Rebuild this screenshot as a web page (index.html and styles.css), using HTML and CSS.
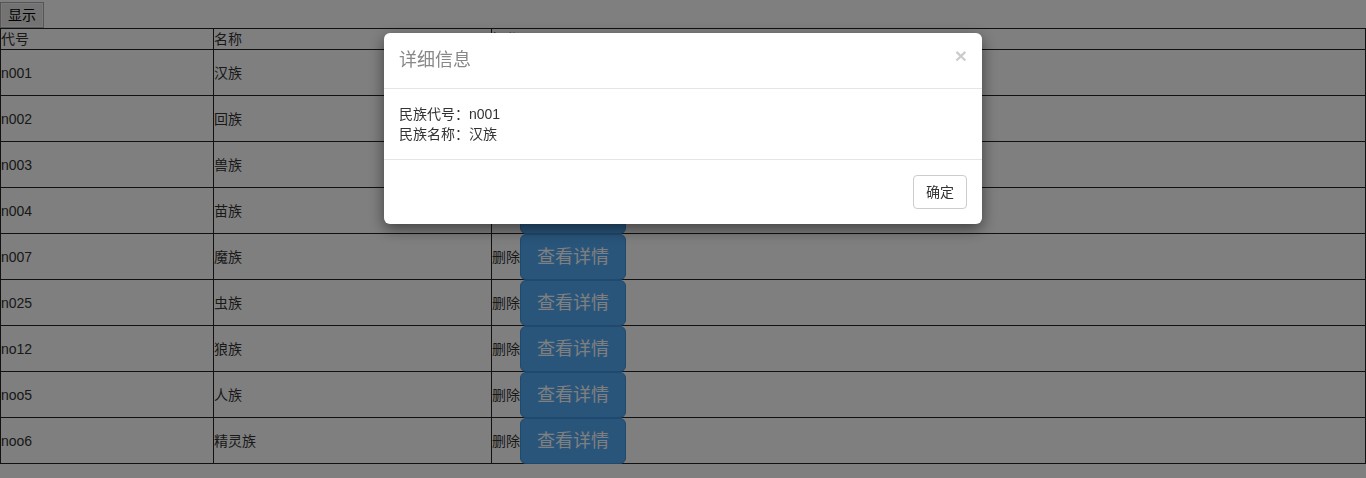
FILE: index.html
```html
<!DOCTYPE html>
<html lang="zh-CN">
<head>
  <meta charset="UTF-8">
  <meta name="viewport" content="width=device-width, initial-scale=1.0">
  <title>民族列表</title>
  <link rel="stylesheet" href="styles.css">
</head>
<body>
  <button class="show-btn">显示</button>
  <table class="nation-table">
    <colgroup>
      <col class="col-code">
      <col class="col-name">
      <col>
    </colgroup>
    <tr class="head-row">
      <td>代号</td>
      <td>名称</td>
      <td>操作</td>
    </tr>
    <tr><td>n001</td><td>汉族</td><td><div class="ops">删除<button class="btn-detail">查看详情</button></div></td></tr>
    <tr><td>n002</td><td>回族</td><td><div class="ops">删除<button class="btn-detail">查看详情</button></div></td></tr>
    <tr><td>n003</td><td>兽族</td><td><div class="ops">删除<button class="btn-detail">查看详情</button></div></td></tr>
    <tr><td>n004</td><td>苗族</td><td><div class="ops">删除<button class="btn-detail">查看详情</button></div></td></tr>
    <tr><td>n007</td><td>魔族</td><td><div class="ops">删除<button class="btn-detail">查看详情</button></div></td></tr>
    <tr><td>n025</td><td>虫族</td><td><div class="ops">删除<button class="btn-detail">查看详情</button></div></td></tr>
    <tr><td>no12</td><td>狼族</td><td><div class="ops">删除<button class="btn-detail">查看详情</button></div></td></tr>
    <tr><td>noo5</td><td>人族</td><td><div class="ops">删除<button class="btn-detail">查看详情</button></div></td></tr>
    <tr><td>noo6</td><td>精灵族</td><td><div class="ops">删除<button class="btn-detail">查看详情</button></div></td></tr>
  </table>

  <div class="backdrop"></div>
  <div class="modal">
    <div class="modal-dialog">
      <div class="modal-header">
        <span class="close">&times;</span>
        <h4 class="modal-title">详细信息</h4>
      </div>
      <div class="modal-body">
        <div>民族代号：n001</div>
        <div>民族名称：汉族</div>
      </div>
      <div class="modal-footer">
        <button class="btn-ok">确定</button>
      </div>
    </div>
  </div>
</body>
</html>
```

FILE: styles.css
```css
body {
  margin: 0;
  font-family: "Liberation Sans", Arial, "Noto Sans CJK SC", sans-serif;
  font-size: 14px;
  line-height: 20px;
  color: #333;
  background: #fff;
}
.show-btn {
  display: block;
  margin-top: 2px;
  padding: 1px 7px;
  height: 26px;
  font: inherit;
  color: #000;
  background: #e6e6e6;
  border: 1px solid #aaa;
  box-shadow: inset 0 0 0 1px #f4f4f4;
}
.nation-table {
  width: 100%;
  table-layout: fixed;
  border-collapse: collapse;
  border: 1px solid #222;
}
.col-code {
  width: 213px;
}
.col-name {
  width: 278px;
}
.nation-table td {
  padding: 0;
  border: 1px solid #222;
  vertical-align: middle;
}
.head-row td {
  height: 20px;
}
.ops {
  display: flex;
  align-items: center;
  height: 45px;
}
.btn-detail {
  height: 46px;
  padding: 10px 16px;
  font: inherit;
  font-size: 18px;
  line-height: 24px;
  color: #fff;
  background: #52aaf6;
  border: 1px solid #3f92dc;
  border-radius: 6px;
}
.backdrop {
  position: fixed;
  inset: 0;
  background: rgba(0, 0, 0, 0.5);
}
.modal {
  position: fixed;
  inset: 0;
}
.modal-dialog {
  width: 598px;
  margin: 33px auto 0;
  background: #fff;
  border-radius: 6px;
  box-shadow: 0 5px 15px rgba(0, 0, 0, 0.5);
}
.modal-header {
  padding: 15px;
  border-bottom: 1px solid #e5e5e5;
}
.modal-title {
  margin: 0;
  font-size: 18px;
  font-weight: normal;
  line-height: 25px;
  color: #888;
}
.close {
  float: right;
  margin-top: -3px;
  font-size: 21px;
  font-weight: bold;
  line-height: 21px;
  color: #000;
  opacity: 0.2;
}
.modal-body {
  padding: 15px;
}
.modal-footer {
  display: flex;
  justify-content: flex-end;
  padding: 15px;
  border-top: 1px solid #e5e5e5;
}
.btn-ok {
  padding: 6px 12px;
  font: inherit;
  color: #333;
  background: #fff;
  border: 1px solid #ccc;
  border-radius: 4px;
}
```
